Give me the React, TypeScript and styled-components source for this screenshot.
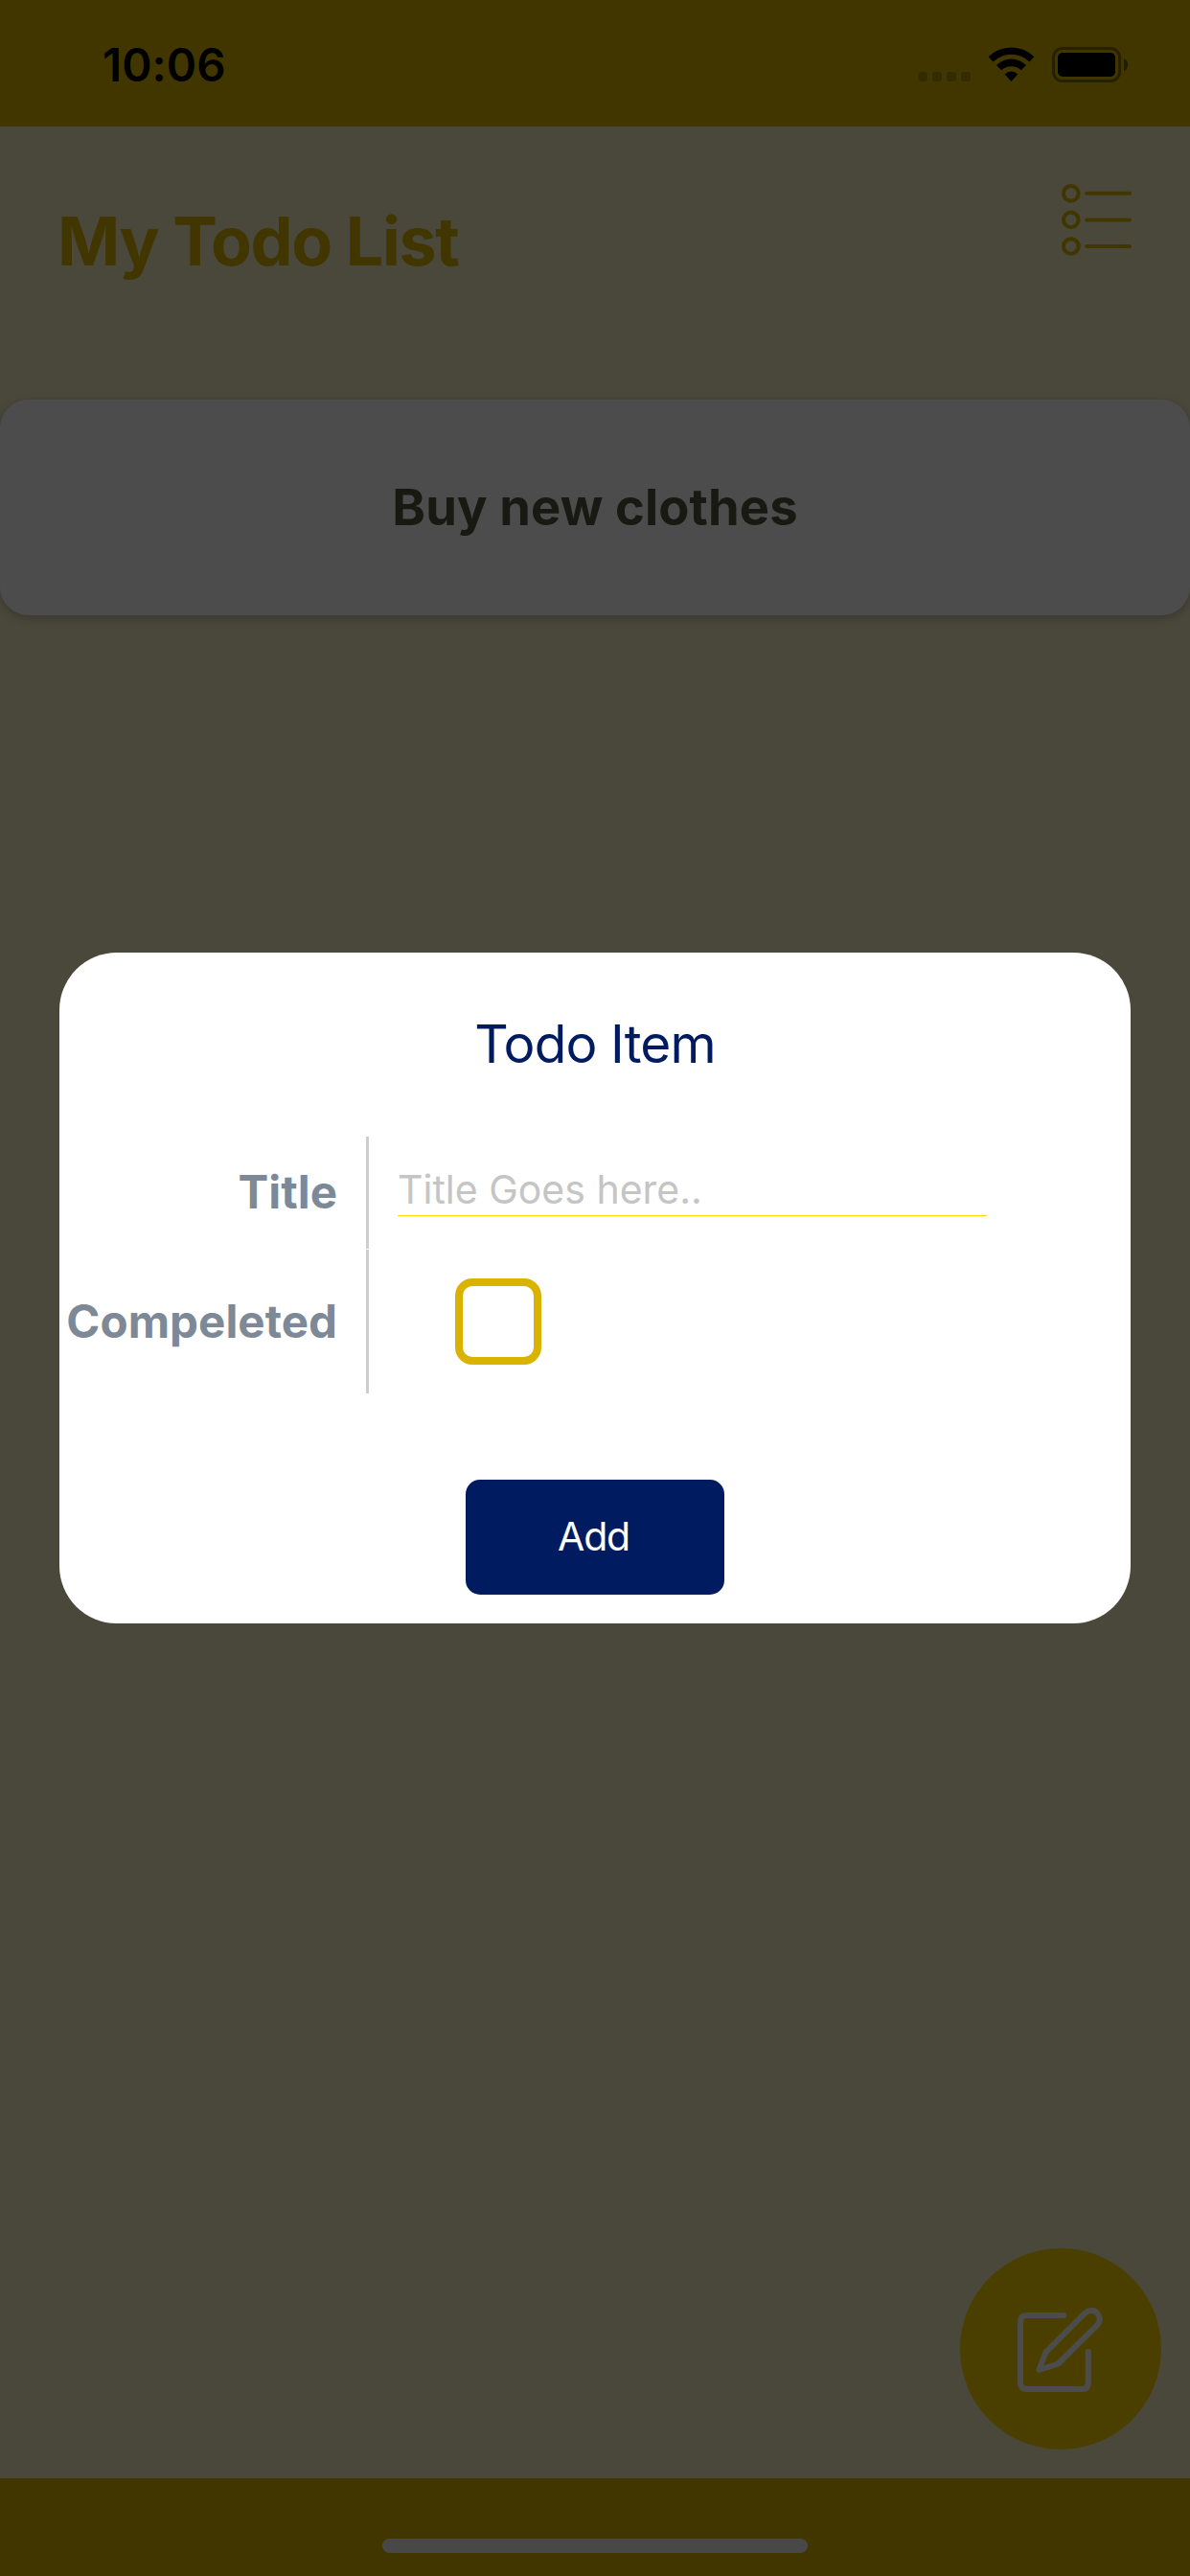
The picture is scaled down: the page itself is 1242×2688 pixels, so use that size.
import React from "react";
import styled, { createGlobalStyle } from "styled-components";

const colors = {
  primary: "#dab300",
  gold: "#fad400",
  cream: "#f8eec6",
  navy: "#001b60",
  label: "#7d8997",
  divider: "#cdcdcd",
};

const GlobalStyle = createGlobalStyle`
  *, *::before, *::after { box-sizing: border-box; }
  body { margin: 0; font-family: Inter, "Liberation Sans", sans-serif; }
  h1, h2, p { margin: 0; }
  svg { display: block; flex: none; }
`;

const Screen = styled.div`
  position: relative;
  width: 1242px;
  height: 2688px;
  overflow: hidden;
  display: flex;
  flex-direction: column;
  background: ${colors.cream};
`;

const StatusBar = styled.div`
  height: 132px;
  padding: 0 64px 0 107px;
  display: flex;
  justify-content: space-between;
  background: ${colors.primary};
`;

const Clock = styled.span`
  margin-top: 38px;
  font-size: 47.5px;
  line-height: 60px;
  font-weight: 600;
  letter-spacing: 0.1px;
  color: #000;
`;

const StatusGlyphs = styled.svg`
  margin-top: 48px;
`;

const Header = styled.header`
  height: 285px;
  padding: 60px 60px 0;
  display: flex;
  align-items: flex-start;
  justify-content: space-between;
`;

const PageTitle = styled.h1`
  margin-top: 15px;
  font-size: 70px;
  line-height: 90px;
  font-weight: 700;
  letter-spacing: -1.45px;
  color: ${colors.primary};
`;

const Main = styled.main`
  flex: 1;
`;

const TodoCard = styled.article`
  height: 225px;
  padding-bottom: 2px;
  display: flex;
  align-items: center;
  justify-content: center;
  border-radius: 30px;
  background: #fff;
  box-shadow: 0 3px 12px rgba(0, 0, 0, 0.23);
`;

const TodoText = styled.p`
  font-size: 52.5px;
  line-height: 64px;
  font-weight: 700;
  letter-spacing: 0.1px;
  color: #555540;
`;

const FabRow = styled.div`
  display: flex;
  justify-content: flex-end;
  padding: 0 30px 30px;
`;

const Fab = styled.button`
  width: 210px;
  height: 210px;
  padding: 0;
  border: 0;
  border-radius: 50%;
  background: ${colors.gold};
`;

const BottomBar = styled.footer`
  height: 102px;
  padding-top: 63px;
  display: flex;
  justify-content: center;
  align-items: flex-start;
  background: ${colors.primary};
`;

const HomeIndicator = styled.div`
  width: 444px;
  height: 15px;
  border-radius: 8px;
  background: #f2f2f2;
`;

const Backdrop = styled.div`
  position: absolute;
  inset: 0;
  display: flex;
  align-items: center;
  justify-content: center;
  background: rgba(0, 0, 0, 0.7);
`;

const Modal = styled.section`
  width: 1118px;
  height: 700px;
  padding-bottom: 30px;
  display: flex;
  flex-direction: column;
  align-items: center;
  border-radius: 60px;
  background: #fff;
`;

const ModalTitle = styled.h2`
  height: 192px;
  padding-top: 61px;
  font-size: 55px;
  line-height: 68px;
  font-weight: 400;
  letter-spacing: -0.9px;
  color: ${colors.navy};
`;

const Form = styled.div`
  flex: 1;
  align-self: stretch;
  display: flex;
  flex-direction: column;
  gap: 1px;
`;

const Row = styled.div<{ $height: number }>`
  height: ${(p) => p.$height}px;
  display: grid;
  grid-template-columns: 323px 1fr;
`;

const Label = styled.label`
  display: flex;
  align-items: center;
  justify-content: flex-end;
  padding: 0 30px 1px 0;
  border-right: 3px solid ${colors.divider};
  font-size: 47.5px;
  line-height: 58px;
  font-weight: 700;
  letter-spacing: 0.05px;
  color: ${colors.label};
`;

const Field = styled.div<{ $indent: number }>`
  display: flex;
  align-items: center;
  padding-left: ${(p) => p.$indent}px;
`;

const TitleInput = styled.input`
  width: 615px;
  height: 49px;
  margin-top: -1px;
  padding: 0 0 6px;
  align-self: center;
  border: 0;
  border-bottom: 1px solid #ffd700;
  background: transparent;
  font-family: inherit;
  font-size: 41px;
  letter-spacing: 0;
  color: #222;

  &::placeholder { color: #c5c5c5; opacity: 1; }
`;

const CheckBox = styled.button`
  width: 90px;
  height: 90px;
  padding: 0;
  border: 8px solid ${colors.primary};
  border-radius: 18px;
  background: #fff;
`;

const AddButton = styled.button`
  width: 270px;
  height: 120px;
  padding: 0 3px 2px 0;
  border: 0;
  border-radius: 15px;
  background: ${colors.navy};
  color: #fff;
  font-family: inherit;
  font-size: 41px;
  letter-spacing: -1.2px;
`;

const StatusIcons = () => (
  <StatusGlyphs width="220" height="40" viewBox="958 48 220 40">
    <g fillOpacity="0.2">
      {[958, 973, 988, 1003].map((x) => (
        <rect key={x} x={x} y="75" width="10" height="10" rx="3" />
      ))}
    </g>
    <path d="M1031.6 59.3a34 34 0 0 1 47.8 0l-5 5.2a27 27 0 0 0-37.800 0z" />
    <path d="M1040 68a22 22 0 0 1 31 0l-5.200 5.300a15 15 0 0 0-20.600 0z" />
    <path d="M1048.600 77.200a10.200 10.200 0 0 1 13.800 0l-6.900 7.800z" />
    <rect x="1099.5" y="50.5" width="69" height="34" rx="9.5" fill="none" stroke="#000" strokeOpacity="0.4" strokeWidth="3" />
    <rect x="1104" y="55" width="60" height="25" rx="5" />
    <path d="M1173 61c5.400 2.200 5.400 11 0 13.200z" fillOpacity="0.5" />
  </StatusGlyphs>
);

const ListIcon = () => (
  <svg width="74" height="76" viewBox="1108 192 74 76" fill="none" stroke={colors.primary} strokeWidth="4" strokeLinecap="round">
    {[201.8, 229.4, 257].map((y) => (
      <g key={y}>
        <circle cx="1117.8" cy={y} r="7.8" />
        <path d={`M1134.2 ${y}H1179`} />
      </g>
    ))}
  </svg>
);

const EditIcon = () => (
  <svg width="210" height="210" viewBox="0 0 210 210" fill="none" stroke="#fff" strokeWidth="6" strokeLinecap="round" strokeLinejoin="round">
    <path d="M108 70H70q-7 0-7 7v63q0 7 7 7h57q6.800 0 6.800-7v-32" />
    <path d="M89.500 108.500l40.500-40.500c3.500-3.500 9.500-4 13-.5s3.600 9.300.2 12.700L102.500 120.500l-20 6.500z" />
  </svg>
);

export default function App() {
  return (
    <>
      <GlobalStyle />
      <Screen>
        <StatusBar>
          <Clock>10:06</Clock>
          <StatusIcons />
        </StatusBar>
        <Header>
          <PageTitle>My Todo List</PageTitle>
          <ListIcon />
        </Header>
        <Main>
          <TodoCard>
            <TodoText>Buy new clothes</TodoText>
          </TodoCard>
        </Main>
        <FabRow>
          <Fab aria-label="New todo">
            <EditIcon />
          </Fab>
        </FabRow>
        <BottomBar>
          <HomeIndicator />
        </BottomBar>
        <Backdrop>
          <Modal role="dialog">
            <ModalTitle>Todo Item</ModalTitle>
            <Form>
              <Row $height={117}>
                <Label htmlFor="title">Title</Label>
                <Field $indent={30}>
                  <TitleInput id="title" placeholder="Title Goes here.." />
                </Field>
              </Row>
              <Row $height={150}>
                <Label>Compeleted</Label>
                <Field $indent={90}>
                  <CheckBox role="checkbox" aria-checked={false} />
                </Field>
              </Row>
            </Form>
            <AddButton>Add</AddButton>
          </Modal>
        </Backdrop>
      </Screen>
    </>
  );
}
